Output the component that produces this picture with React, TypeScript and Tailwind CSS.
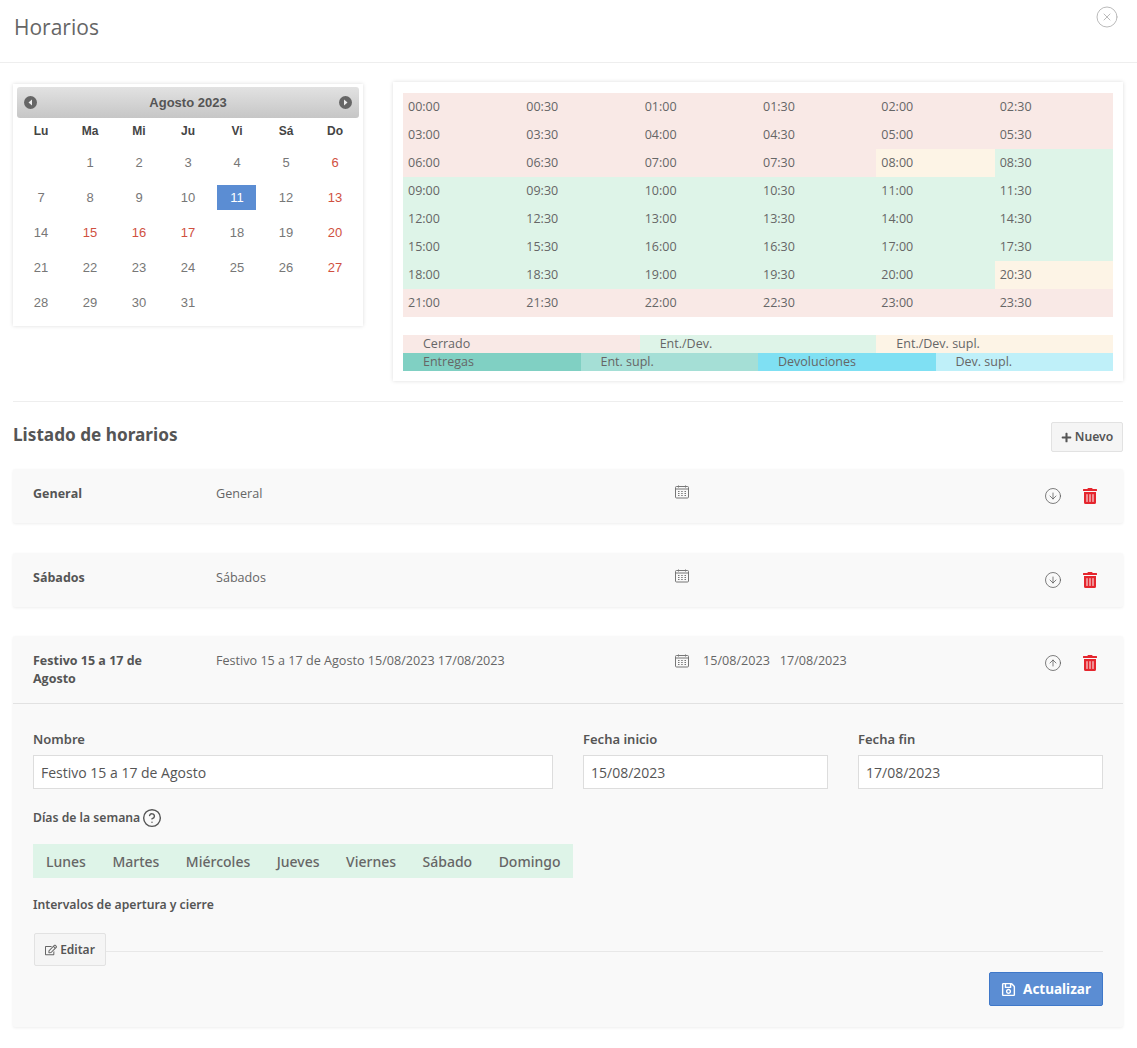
import { CircleArrowDown, CircleArrowUp, CircleHelp, CircleX } from "lucide-react";
import { FaPlus, FaRegEdit, FaRegSave, FaTrashAlt } from "react-icons/fa";

const HOURS = Array.from({ length: 48 }, (_, i) => {
  const h = String(Math.floor(i / 2)).padStart(2, "0");
  return `${h}:${i % 2 ? "30" : "00"}`;
});

function slotClass(i: number) {
  if (i === 16 || i === 41) return "bg-[#fdf4e6]";
  if (i >= 17 && i <= 40) return "bg-[#def4e8]";
  return "bg-[#f9e9e6]";
}

const WEEK = ["Lu", "Ma", "Mi", "Ju", "Vi", "Sá", "Do"];
const DAYS = [0, 1, 2, 3, 4, 5, 6, 7, 8, 9, 10, 11, 12, 13, 14, 15, 16, 17, 18, 19, 20, 21, 22, 23, 24, 25, 26, 27, 28, 29, 30, 31];
const RED_DAYS = [6, 13, 15, 16, 17, 20, 27];

function NavArrow({ dir }: { dir: "left" | "right" }) {
  return (
    <svg width="13" height="13" viewBox="0 0 13 13">
      <circle cx="6.5" cy="6.5" r="6.5" fill="#666" />
      <path d={dir === "left" ? "M8 3.5v6L4.5 6.5z" : "M5 3.5v6l3.5-3z"} fill="#eee" />
    </svg>
  );
}

function Calendar() {
  return (
    <div className="h-[242px] w-[350px] bg-white p-[3px] shadow-[0_0_4px_rgba(0,0,0,0.14)] font-['Liberation_Sans',sans-serif]">
      <div className="mx-px flex h-[31px] items-center justify-between rounded-[3px] bg-gradient-to-b from-[#e2e2e2] to-[#c6c6c6] px-[7px]">
        <NavArrow dir="left" />
        <span className="text-[13px] font-bold text-[#555]">Agosto 2023</span>
        <NavArrow dir="right" />
      </div>
      <div className="grid grid-cols-[repeat(7,49px)]">
        {WEEK.map((d) => (
          <div key={d} className="mt-[3px] mb-[4px] h-[20px] pl-px text-center text-[12px] leading-[20px] font-bold text-[#444]">
            {d}
          </div>
        ))}
        {DAYS.map((d) => (
          <div key={d} className="flex h-[35px] items-center justify-center">
            {d > 0 && (
              <span
                className={`flex h-[25px] w-[39px] items-center justify-center pl-px text-[13px] ${
                  d === 11
                    ? "bg-[#5b8dd3] text-white"
                    : RED_DAYS.includes(d)
                      ? "text-[#d0503f]"
                      : "text-[#777]"
                }`}
              >
                {d}
              </span>
            )}
          </div>
        ))}
      </div>
    </div>
  );
}

function Schedule() {
  return (
    <div className="h-[299px] w-[730px] bg-white px-[10px] pt-[11px] shadow-[0_0_4px_rgba(0,0,0,0.14)]">
      <div className="grid grid-cols-6">
        {HOURS.map((h, i) => (
          <div key={h} className={`h-[28px] pl-[5px] text-[12.5px] leading-[28px] text-[#666] ${slotClass(i)}`}>
            {h}
          </div>
        ))}
      </div>
      <div className="mt-[18px] grid grid-cols-3 text-[12.5px] leading-[18px] text-[#666]">
        <div className="h-[18px] bg-[#f9e9e6] pl-[20px]">Cerrado</div>
        <div className="h-[18px] bg-[#def4e8] pl-[20px]">Ent./Dev.</div>
        <div className="h-[18px] bg-[#fdf4e6] pl-[20px]">Ent./Dev. supl.</div>
      </div>
      <div className="grid grid-cols-4 text-[12.5px] leading-[18px] text-[#666]">
        <div className="h-[18px] bg-[#80d0c3] pl-[20px]">Entregas</div>
        <div className="h-[18px] bg-[#a5dfd6] pl-[20px]">Ent. supl.</div>
        <div className="h-[18px] bg-[#7fe0f3] pl-[20px]">Devoluciones</div>
        <div className="h-[18px] bg-[#bff0f9] pl-[20px]">Dev. supl.</div>
      </div>
    </div>
  );
}

function CalendarIcon() {
  return (
    <svg width="14" height="14" viewBox="0 0 14 14" fill="none" stroke="#777" strokeWidth="1">
      <rect x="0.5" y="1.5" width="13" height="11.5" rx="1" />
      <path d="M0.5 4h13M3.5 0.5v2M10.5 0.5v2" />
      <path d="M3 6.5h1.5M6.2 6.5h1.5M9.5 6.5h1.5M3 8.5h1.5M6.2 8.5h1.5M9.5 8.5h1.5M3 10.5h1.5M6.2 10.5h1.5M9.5 10.5h1.5" strokeWidth="1.2" />
    </svg>
  );
}

interface RowHeaderProps {
  name: string;
  description: string;
  dates?: string[];
  open?: boolean;
}

function RowHeader({ name, description, dates, open }: RowHeaderProps) {
  return (
    <div className="flex items-start pl-[20px] pr-[25px] pt-[16px]">
      <div className="w-[183px] pr-[50px] text-[12.5px] leading-[18px] font-bold text-[#555]">{name}</div>
      <div className="w-[459px] text-[12.6px] leading-[18px] text-[#666]">{description}</div>
      <div className="flex w-[360px] items-center text-[12.6px] leading-[18px] text-[#666]">
        <CalendarIcon />
        {dates && (
          <div className="ml-[14px] flex gap-[10px]">
            {dates.map((d) => (
              <span key={d}>{d}</span>
            ))}
          </div>
        )}
      </div>
      <div className="ml-auto flex items-center gap-[20px] pt-[2px]">
        {open ? (
          <CircleArrowUp size={18} strokeWidth={1} color="#555" />
        ) : (
          <CircleArrowDown size={18} strokeWidth={1} color="#555" />
        )}
        <FaTrashAlt size={16} color="#e5262e" />
      </div>
    </div>
  );
}

function Field({ label, value, className }: { label: string; value: string; className: string }) {
  return (
    <div className={className}>
      <div className="mb-[6px] h-[20px] text-[13px] leading-[20px] font-semibold text-[#555] font-['Noto_Sans',sans-serif]">{label}</div>
      <div className="flex h-[34px] items-center border border-[#ddd] bg-white pl-[7px] text-[14px] text-[#555]">{value}</div>
    </div>
  );
}

const WEEK_DAYS = ["Lunes", "Martes", "Miércoles", "Jueves", "Viernes", "Sábado", "Domingo"];

function Detail() {
  return (
    <div className="border-t border-[#e2e2e2] px-[20px] pt-[25px] pb-[21px]">
      <div className="flex gap-[30px]">
        <Field label="Nombre" value="Festivo 15 a 17 de Agosto" className="w-[520px]" />
        <Field label="Fecha inicio" value="15/08/2023" className="w-[245px]" />
        <Field label="Fecha fin" value="17/08/2023" className="w-[245px]" />
      </div>
      <div className="mt-[19px] flex h-[20px] items-center gap-[2px] text-[12.2px] font-semibold text-[#555] font-['Noto_Sans',sans-serif]">
        Días de la semana
        <CircleHelp size={20} strokeWidth={1.7} color="#555" />
      </div>
      <div className="mt-[16px] flex h-[34px] w-[540px] items-center gap-[26.5px] bg-[#def4e8] pl-[13px] text-[14px] font-medium text-[#666] font-['Noto_Sans',sans-serif]">
        {WEEK_DAYS.map((d) => (
          <span key={d}>{d}</span>
        ))}
      </div>
      <div className="mt-[17px] h-[20px] text-[12.2px] leading-[20px] font-semibold text-[#555] font-['Noto_Sans',sans-serif]">
        Intervalos de apertura y cierre
      </div>
      <div className="mt-[18px] flex items-center pl-px">
        <button className="flex h-[33px] w-[72px] items-center justify-center gap-[3px] rounded-[2px] border border-[#e2e2e2] bg-[#f5f5f5] text-[12px] font-semibold text-[#555] font-['Noto_Sans',sans-serif]">
          <FaRegEdit size={12} color="#666" />
          Editar
        </button>
        <div className="h-px flex-1 translate-y-[2px] bg-[#e8e8e8]" />
      </div>
      <div className="mt-[6px] flex justify-end">
        <button className="flex h-[34px] w-[114px] items-center justify-center gap-[7px] rounded-[2px] border border-[#3f78c9] bg-[#5b8dd3] text-[13.5px] font-bold text-white font-['Noto_Sans',sans-serif]">
          <FaRegSave size={15} />
          Actualizar
        </button>
      </div>
    </div>
  );
}

export default function App() {
  return (
    <div className="h-[1048px] w-[1137px] overflow-hidden bg-white font-['Open_Sans',sans-serif]">
      <header className="relative h-[63px] border-b border-[#eee] pl-[14px] pt-[11px] text-[21px] leading-[32px] text-[#666]">
        Horarios
        <CircleX size={24} strokeWidth={1} color="#bbb" className="absolute top-[5px] right-[18px]" />
      </header>
      <div className="pl-[13px] pr-[14px]">
        <div className="flex items-start gap-[30px] pt-[19px]">
          <div className="pt-[2px]">
            <Calendar />
          </div>
          <Schedule />
        </div>
        <div className="mt-[20px] flex items-start justify-between border-t border-[#eee] pt-[20px]">
          <h2 className="text-[17.2px] leading-[26px] font-bold text-[#555] font-['Noto_Sans',sans-serif]">Listado de horarios</h2>
          <button className="flex h-[30px] w-[72px] items-center justify-center gap-[3px] rounded-[2px] border border-[#e2e2e2] bg-[#f5f5f5] text-[12.2px] font-semibold text-[#555] font-['Noto_Sans',sans-serif]">
            <FaPlus size={11} />
            Nuevo
          </button>
        </div>
        <div className="mt-[17px] flex flex-col gap-[30px]">
          <section className="h-[54px] rounded-[2px] bg-[#f9f9f9] shadow-[0_1px_3px_rgba(0,0,0,0.07)]">
            <RowHeader name="General" description="General" />
          </section>
          <section className="h-[54px] rounded-[2px] bg-[#f9f9f9] shadow-[0_1px_3px_rgba(0,0,0,0.07)]">
            <RowHeader name="Sábados" description="Sábados" />
          </section>
          <section className="-mt-px rounded-[2px] bg-[#f9f9f9] shadow-[0_1px_3px_rgba(0,0,0,0.07)]">
            <div className="h-[67px]">
              <RowHeader
                name="Festivo 15 a 17 de Agosto"
                description="Festivo 15 a 17 de Agosto 15/08/2023 17/08/2023"
                dates={["15/08/2023", "17/08/2023"]}
                open
              />
            </div>
            <Detail />
          </section>
        </div>
      </div>
    </div>
  );
}
